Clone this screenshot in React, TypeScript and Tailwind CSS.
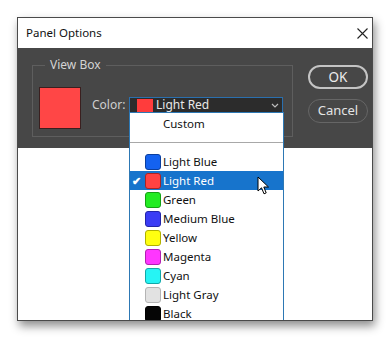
import React from 'react'

type Swatch = {
    name: string
    color: string
    border: string
}

const swatches: Swatch[] = [
    { name: 'Light Blue', color: '#1462f0', border: '#0b3f9e' },
    { name: 'Light Red', color: '#ff4242', border: '#a82424' },
    { name: 'Green', color: '#22ec22', border: '#14a014' },
    { name: 'Medium Blue', color: '#3a3cf5', border: '#2224a8' },
    { name: 'Yellow', color: '#ffff10', border: '#b0b000' },
    { name: 'Magenta', color: '#ff36ff', border: '#b020b0' },
    { name: 'Cyan', color: '#26f4f4', border: '#12a8a8' },
    { name: 'Light Gray', color: '#e2e2e2', border: '#b4b4b4' },
    { name: 'Black', color: '#050505', border: '#000000' },
]

const selected = 'Light Red'

const Cursor = () => (
    <svg width="13" height="20" viewBox="0 0 13 20" className="absolute left-[127px] top-[5px]">
        <path
            d="M1 1 L1 15 L4.5 11.8 L7 17.8 L9.2 16.9 L6.8 11 L11.5 11 Z"
            fill="#ffffff"
            stroke="#000000"
            strokeWidth="1"
            strokeLinejoin="round"
        />
    </svg>
)

const App = () => {
    return (
        <div
            className="w-[388px] h-[337px] bg-white pt-[17px] pl-[17px] overflow-hidden"
            style={{ fontFamily: '"Noto Sans", "Open Sans", Arial, sans-serif' }}
        >
            <div className="relative w-[356px] h-[304px] border border-[#4a4a4a] bg-white shadow-[2px_5px_9px_rgba(0,0,0,0.45)] overflow-hidden">
                {/* title bar */}
                <div className="h-[30px] flex items-center justify-between pl-[8px] pr-[4px]">
                    <span className="text-[11.5px] text-[#111]">Panel Options</span>
                    <svg width="11" height="11" viewBox="0 0 11 11">
                        <path d="M0.5 0.5 L10.5 10.5 M10.5 0.5 L0.5 10.5" stroke="#222" strokeWidth="1.1" />
                    </svg>
                </div>

                {/* dark body */}
                <div className="h-[100px] bg-[#474747] flex items-start pl-[14px] pt-[17px]">
                    <div className="relative w-[261px] h-[72px] border border-[#5e5e5e]">
                        <span className="absolute -top-[10px] left-[12px] bg-[#474747] px-[5px] text-[12px] text-[#d4d4d4]">
                            View Box
                        </span>
                        <div className="flex items-start pl-[6px] pt-[21px]">
                            <div className="w-[42px] h-[42px] bg-[#ff4646] border border-[#3a1f1f]" />
                            <div className="flex items-center ml-[11px] mt-[9px]">
                                <span className="w-[37px] text-[12px] text-[#cfcfcf]">Color:</span>
                                <div className="w-[154px] h-[17px] bg-[#2c2c2c] border border-[#2a6fae] flex items-center pl-[7px] pr-[3px]">
                                    <div className="w-[16px] h-[13px] bg-[#ff3c3c]" />
                                    <span className="ml-[3px] text-[12px] leading-none text-[#e8e8e8]">Light Red</span>
                                    <svg width="8" height="5" viewBox="0 0 8 5" className="ml-auto">
                                        <path d="M1 1 L4 4 L7 1" fill="none" stroke="#bdbdbd" strokeWidth="1.2" />
                                    </svg>
                                </div>
                            </div>
                        </div>
                    </div>

                    <div className="ml-[15px] flex flex-col">
                        <button className="w-[60px] h-[24px] rounded-full border-2 border-[#c4c4c4] bg-[#474747] text-[13.5px] text-[#ececec] flex items-center justify-center">
                            OK
                        </button>
                        <button className="mt-[10px] w-[60px] h-[24px] rounded-full border-[1.5px] border-[#666666] bg-[#474747] text-[13px] text-[#e4e4e4] flex items-center justify-center">
                            Cancel
                        </button>
                    </div>
                </div>

                {/* open dropdown list */}
                <div className="absolute left-[111px] top-[94px] w-[155px] h-[220px] bg-white border border-[#2d78b4] pt-[1px]">
                    <div className="h-[19px] flex items-center pl-[33px] text-[11.5px] text-[#111]">Custom</div>
                    <div className="h-[19px] flex items-center">
                        <div className="w-full h-px bg-[#a8a8a8]" />
                    </div>
                    {swatches.map(s => {
                        const active = s.name === selected
                        return (
                            <div
                                key={s.name}
                                className={
                                    active
                                        ? 'relative h-[19px] flex items-center bg-[#1774cc] text-white'
                                        : 'relative h-[19px] flex items-center text-[#111]'
                                }
                            >
                                <span className="w-[15px] pl-[2px] text-[11px] leading-none font-bold">{active ? '✔' : ''}</span>
                                <div
                                    className="w-[16px] h-[16px] rounded-[3px] border"
                                    style={{ backgroundColor: s.color, borderColor: s.border }}
                                />
                                <span className="ml-[2px] text-[11.5px]">{s.name}</span>
                                {active && <Cursor />}
                            </div>
                        )
                    })}
                </div>
            </div>
        </div>
    )
}

export default App
